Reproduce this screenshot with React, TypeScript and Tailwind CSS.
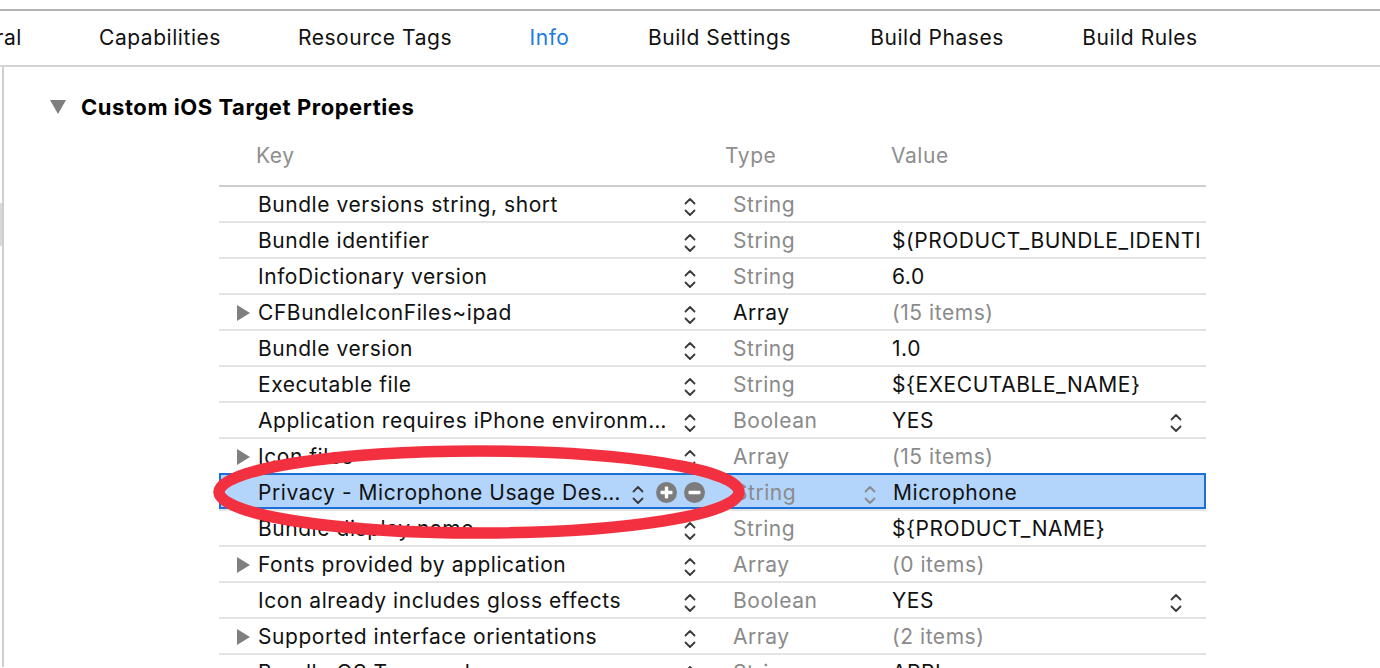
const tabs = [
  { label: 'General', w: 'w-[75px]', extra: 'ml-[-53px] justify-end' },
  { label: 'Capabilities', w: 'w-[120px]' },
  { label: 'Resource Tags', w: 'w-[154px]' },
  { label: 'Info', w: 'w-[39px]', active: true },
  { label: 'Build Settings', w: 'w-[145px]' },
  { label: 'Build Phases', w: 'w-[134px]' },
  { label: 'Build Rules', w: 'w-[116px]' },
];

type Row = {
  key: string;
  type: string;
  value?: string;
  expandable?: boolean;
  typeDark?: boolean;
  valueGray?: boolean;
  valueStepper?: boolean;
  selected?: boolean;
};

const rows: Row[] = [
  { key: 'Bundle versions string, short', type: 'String', value: '' },
  { key: 'Bundle identifier', type: 'String', value: '$(PRODUCT_BUNDLE_IDENTI' },
  { key: 'InfoDictionary version', type: 'String', value: '6.0' },
  { key: 'CFBundleIconFiles~ipad', type: 'Array', value: '(15 items)', expandable: true, typeDark: true, valueGray: true },
  { key: 'Bundle version', type: 'String', value: '1.0' },
  { key: 'Executable file', type: 'String', value: '${EXECUTABLE_NAME}' },
  { key: 'Application requires iPhone environm…', type: 'Boolean', value: 'YES', valueStepper: true },
  { key: 'Icon files', type: 'Array', value: '(15 items)', expandable: true, valueGray: true },
  { key: 'Privacy - Microphone Usage Des…', type: 'String', value: 'Microphone', selected: true },
  { key: 'Bundle display name', type: 'String', value: '${PRODUCT_NAME}' },
  { key: 'Fonts provided by application', type: 'Array', value: '(0 items)', expandable: true, valueGray: true },
  { key: 'Icon already includes gloss effects', type: 'Boolean', value: 'YES', valueStepper: true },
  { key: 'Supported interface orientations', type: 'Array', value: '(2 items)', expandable: true, valueGray: true },
  { key: 'Bundle OS Type code', type: 'String', value: 'APPL' },
];

function Stepper({ color = '#3a3a3a' }: { color?: string }) {
  return (
    <svg className="w-[14px] h-[22px] mt-[4px] shrink-0" viewBox="0 0 14 22" fill="none" stroke={color} strokeWidth={1.8} strokeLinecap="round" strokeLinejoin="round">
      <path d="M2.5 7.5L7 3l4.5 4.5" />
      <path d="M2.5 14.5L7 19l4.5-4.5" />
    </svg>
  );
}

function Disclosure() {
  return (
    <svg className="w-[13px] h-[16px]" viewBox="0 0 13 16">
      <path d="M0 0L13 8L0 16Z" fill="#7f7f7f" />
    </svg>
  );
}

function RoundButton({ minus }: { minus?: boolean }) {
  return (
    <svg className="w-[21px] h-[21px] shrink-0" viewBox="0 0 21 21">
      <circle cx="10.5" cy="10.5" r="10.5" fill="#7c7c7c" />
      <rect x="4.5" y="8.8" width="12" height="3.4" rx="1" fill="#fff" />
      {!minus && <rect x="8.8" y="4.5" width="3.4" height="12" rx="1" fill="#fff" />}
    </svg>
  );
}

function PlistRow({ row }: { row: Row }) {
  return (
    <div className={`relative flex h-[36px] items-center pt-[1px] border-b-2 border-[#e4e4e4] ${row.selected ? 'bg-[#b3d5fc]' : ''}`}>
      {row.selected && (
        <div className="absolute left-0 right-0 top-[-2px] bottom-0 border-2 border-[#1b6fd8]" />
      )}
      <div className="w-[39px] shrink-0 flex justify-end pr-[8px]">{row.expandable && <Disclosure />}</div>
      {row.selected ? (
        <>
          <div className="w-[373px] shrink-0 whitespace-nowrap overflow-hidden text-[#111]">{row.key}</div>
          <Stepper />
          <div className="w-[11px] shrink-0" />
          <RoundButton />
          <div className="w-[7px] shrink-0" />
          <RoundButton minus />
          <div className="w-[29px] shrink-0" />
          <div className="w-[159px] shrink-0 flex items-center text-[#8a8a8a]">
            <span className="w-[129px]">{row.type}</span>
            <Stepper color="#8a8a8a" />
          </div>
        </>
      ) : (
        <>
          <div className="w-[425px] shrink-0 whitespace-nowrap overflow-hidden text-[#111]">{row.key}</div>
          <Stepper />
          <div className="w-[36px] shrink-0" />
          <div className={`w-[159px] shrink-0 ${row.typeDark ? 'text-[#111]' : 'text-[#8a8a8a]'}`}>{row.type}</div>
        </>
      )}
      <div className="flex-1 flex items-center overflow-hidden pr-[4px]">
        <span className={`whitespace-nowrap ${row.valueStepper ? 'w-[277px]' : ''} ${row.valueGray ? 'text-[#8a8a8a]' : 'text-[#111]'}`}>
          {row.value}
        </span>
        {row.valueStepper && <Stepper />}
      </div>
    </div>
  );
}

export default function App() {
  return (
    <div className="relative w-[1380px] h-[668px] overflow-hidden bg-white [font-family:Inter,'Liberation_Sans',sans-serif] text-[21px] tracking-[0.55px] text-[#111]">
      {/* tab bar */}
      <div className="h-[9px]" />
      <div className="border-t-2 border-b-2 border-t-[#b4b4b4] border-b-[#d4d4d4] h-[58px] flex items-center gap-[78px] overflow-hidden">
        {tabs.map((t) => (
          <div key={t.label} className={`flex shrink-0 whitespace-nowrap ${t.w} ${t.extra ?? 'justify-center'} ${t.active ? 'text-[#1c7ae4]' : 'text-[#111]'}`}>
            {t.label}
          </div>
        ))}
      </div>

      <div className="flex">
        {/* left edge */}
        <div className="w-[4px] h-[600px] border-r-2 border-[#cfcfcf]">
          <div className="mt-[136px] h-[43px] w-[2px] bg-[#d8d8d8]" />
        </div>

        <div className="flex-1">
          {/* section header */}
          <div className="pt-[28px] pl-[46px] flex items-center gap-[15px] h-[52px]">
            <svg className="w-[16px] h-[14px] mt-[-1px]" viewBox="0 0 16 14">
              <path d="M0 0H16L8 14Z" fill="#7f7f7f" />
            </svg>
            <span className="font-bold text-[22px] tracking-[0.55px] text-black">Custom iOS Target Properties</span>
          </div>

          {/* table */}
          <div className="ml-[215px] w-[987px] mt-[16px]">
            <div className="h-[52px] flex items-center pb-[8px] border-b-2 border-[#cdcdcd] text-[#8e8e8e]">
              <span className="w-[506px] pl-[37px]">Key</span>
              <span className="w-[166px]">Type</span>
              <span>Value</span>
            </div>
            {rows.map((r) => (
              <PlistRow key={r.key} row={r} />
            ))}
          </div>
        </div>
      </div>

      {/* red annotation */}
      <svg className="absolute inset-0 w-[1380px] h-[668px] pointer-events-none" viewBox="0 0 1380 668">
        <ellipse cx="479" cy="492" rx="260" ry="41" fill="none" stroke="#f2303f" strokeWidth="11.5" />
      </svg>
    </div>
  );
}
